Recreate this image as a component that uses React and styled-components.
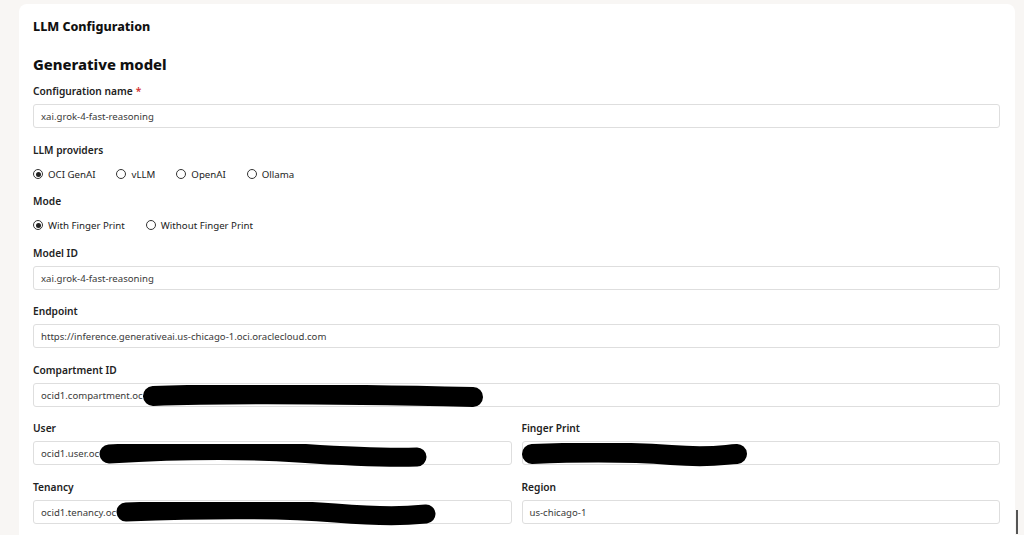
import React from 'react';
import styled, { createGlobalStyle } from 'styled-components';

const GlobalStyle = createGlobalStyle`
  html, body {
    margin: 0;
    padding: 0;
    background: #ffffff;
  }
  body {
    font-family: 'Noto Sans', 'Open Sans', sans-serif;
    color: #1f1f1f;
  }
`;

const Page = styled.div`
  position: relative;
  height: 535px;
  background: #f8f6f4;
  padding: 4px 9px 0 19px;
  box-sizing: border-box;
  overflow: hidden;
`;

const Card = styled.div`
  background: #ffffff;
  border-radius: 8px 8px 0 0;
  height: 100%;
  padding: 14px 15px 0 14px;
  box-sizing: border-box;
`;

const Title = styled.div`
  font-size: 12.5px;
  line-height: 18px;
  font-weight: 800;
  color: #111;
`;

const Heading = styled.h2`
  margin: 17px 0 8px;
  font-size: 14.8px;
  line-height: 22px;
  font-weight: 800;
  color: #111;
`;

const Form = styled.div`
  display: flex;
  flex-direction: column;
  gap: 13px;
`;

const Field = styled.div`
  display: flex;
  flex-direction: column;
  gap: ${(p) => (p.$radio ? '8px' : '5px')};
  margin-top: ${(p) => p.$shift || 0}px;
`;

const Label = styled.label`
  font-size: 10.2px;
  line-height: 16px;
  font-weight: 600;
  color: #222;
`;

const Required = styled.span`
  color: #d32f2f;
  margin-left: 3px;
`;

const InputBox = styled.div`
  position: relative;
  height: 24px;
  border: 1px solid #dedede;
  border-radius: 3px;
  box-sizing: border-box;
  display: flex;
  align-items: center;
  padding: 0 7px;
  font-size: 9.6px;
  color: #3a3a3a;
  background: #fff;
  overflow: visible;
`;

const RadioRow = styled.div`
  display: flex;
  align-items: center;
  gap: 21px;
  height: 16px;
`;

const RadioItem = styled.span`
  display: inline-flex;
  align-items: center;
  gap: 5px;
  font-size: 9.7px;
  color: #222;
`;

const RadioDot = styled.span`
  width: 8px;
  height: 8px;
  border: 1.3px solid #333;
  border-radius: 50%;
  display: inline-flex;
  align-items: center;
  justify-content: center;
  &::after {
    content: '';
    width: 5px;
    height: 5px;
    border-radius: 50%;
    background: ${(p) => (p.$on ? '#222' : 'transparent')};
  }
`;

const TwoCols = styled.div`
  display: grid;
  grid-template-columns: 1fr 1fr;
  column-gap: 10px;
  row-gap: 14px;
`;

const Redact = styled.svg`
  position: absolute;
  top: ${(p) => p.$top}px;
  left: ${(p) => p.$left}px;
  pointer-events: none;
`;

const Cursor = styled.div`
  position: absolute;
  right: 6px;
  bottom: 1px;
  width: 2px;
  height: 24px;
  background: #555;
`;

function Radio({ on, children }) {
  return (
    <RadioItem>
      <RadioDot $on={on} />
      {children}
    </RadioItem>
  );
}

function Input({ children, blot }) {
  return (
    <InputBox>
      {children}
      {blot}
    </InputBox>
  );
}

export default function App() {
  return (
    <>
      <GlobalStyle />
      <Page>
        <Card>
          <Title>LLM Configuration</Title>
          <Heading>Generative model</Heading>
          <Form>
            <Field>
              <Label>
                Configuration name<Required>*</Required>
              </Label>
              <Input>xai.grok-4-fast-reasoning</Input>
            </Field>
            <Field $radio $shift={1}>
              <Label>LLM providers</Label>
              <RadioRow>
                <Radio on>OCI GenAI</Radio>
                <Radio>vLLM</Radio>
                <Radio>OpenAI</Radio>
                <Radio>Ollama</Radio>
              </RadioRow>
            </Field>
            <Field $radio $shift={-2}>
              <Label>Mode</Label>
              <RadioRow>
                <Radio on>With Finger Print</Radio>
                <Radio>Without Finger Print</Radio>
              </RadioRow>
            </Field>
            <Field $shift={-1}>
              <Label>Model ID</Label>
              <Input>xai.grok-4-fast-reasoning</Input>
            </Field>
            <Field>
              <Label>Endpoint</Label>
              <Input>https://inference.generativeai.us-chicago-1.oci.oraclecloud.com</Input>
            </Field>
            <Field $shift={1}>
              <Label>Compartment ID</Label>
              <Input
                blot={
                  <Redact $top={1} $left={108} width="342" height="23" viewBox="0 0 342 23">
                    <path d="M11 11 C 90 8, 200 9, 331 12" stroke="#000" strokeWidth="20" strokeLinecap="round" fill="none" />
                  </Redact>
                }
              >
                ocid1.compartment.oc
              </Input>
            </Field>
            <TwoCols>
              <Field>
                <Label>User</Label>
                <Input
                  blot={
                    <Redact $top={2} $left={64} width="330" height="24" viewBox="0 0 330 24">
                      <path d="M11 10 C 80 6, 140 5, 200 9 S 290 14, 319 13" stroke="#000" strokeWidth="19" strokeLinecap="round" fill="none" />
                    </Redact>
                  }
                >
                  ocid1.user.oc
                </Input>
              </Field>
              <Field>
                <Label>Finger Print</Label>
                <Input
                  blot={
                    <Redact $top={1} $left={-2} width="228" height="24" viewBox="0 0 228 24">
                      <path d="M11 11 C 60 9, 110 9, 150 12 S 200 12, 216 11" stroke="#000" strokeWidth="20" strokeLinecap="round" fill="none" />
                    </Redact>
                  }
                />
              </Field>
              <Field>
                <Label>Tenancy</Label>
                <Input
                  blot={
                    <Redact $top={1} $left={81} width="322" height="24" viewBox="0 0 322 24">
                      <path d="M11 10 C 90 7, 170 7, 220 11 S 290 14, 311 12" stroke="#000" strokeWidth="19" strokeLinecap="round" fill="none" />
                    </Redact>
                  }
                >
                  ocid1.tenancy.oc
                </Input>
              </Field>
              <Field>
                <Label>Region</Label>
                <Input>us-chicago-1</Input>
              </Field>
            </TwoCols>
          </Form>
        </Card>
        <Cursor />
      </Page>
    </>
  );
}
